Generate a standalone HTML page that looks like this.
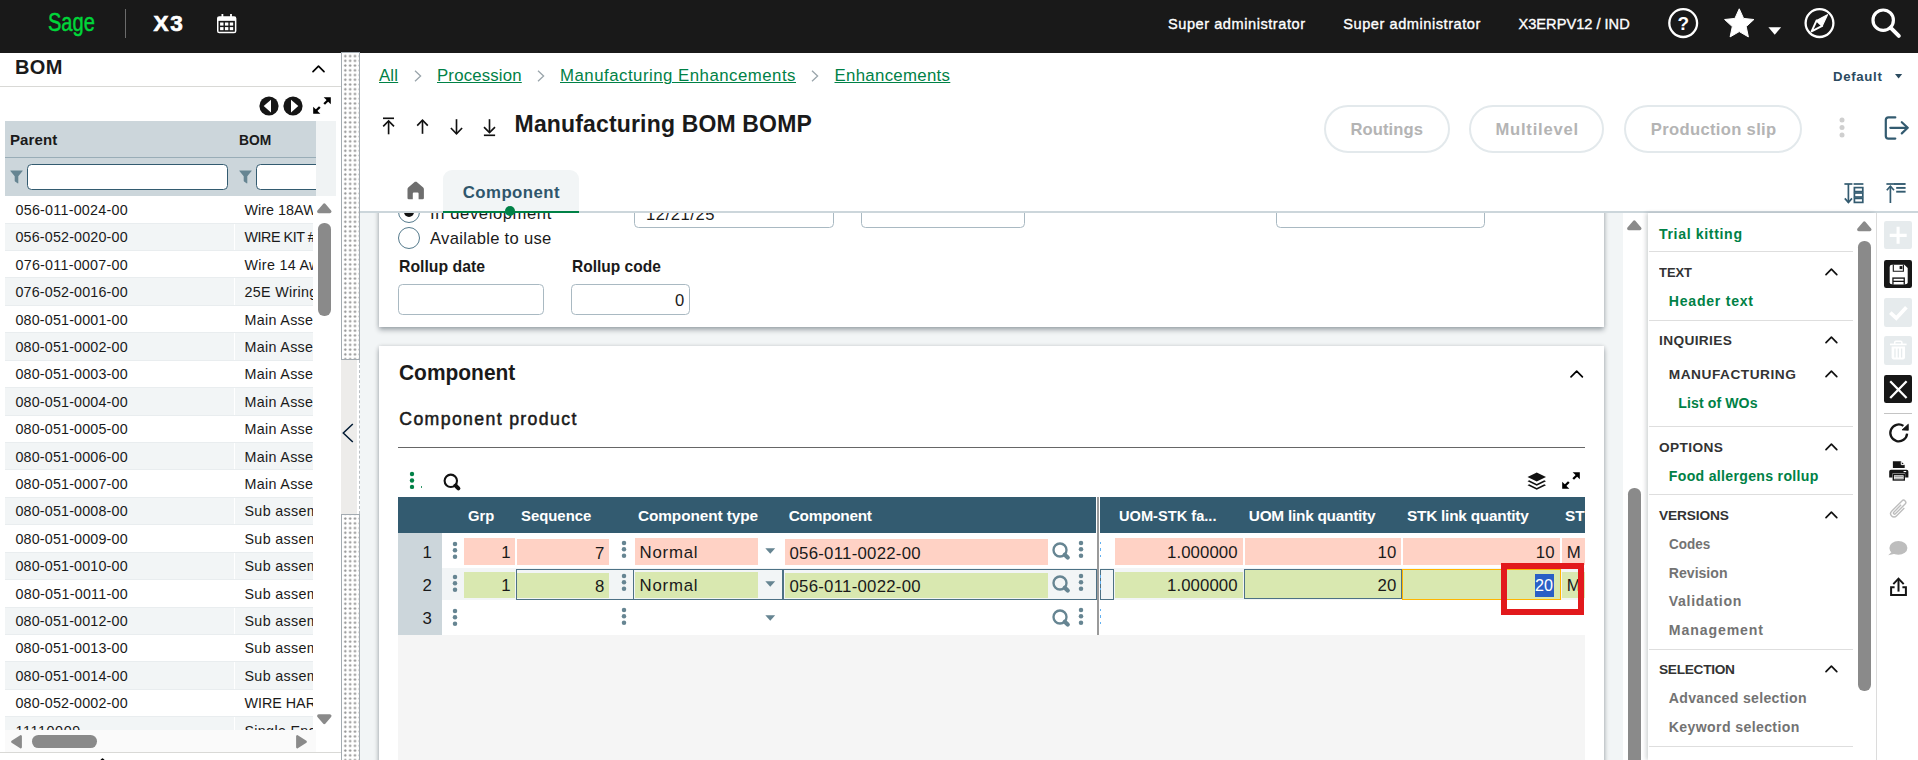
<!DOCTYPE html>
<html lang="en"><head><meta charset="utf-8"><title>Manufacturing BOM BOMP</title>
<style>
html,body{margin:0;padding:0;}
body{width:1918px;height:760px;overflow:hidden;position:relative;background:#fff;font-family:"Liberation Sans", sans-serif;}
.t{position:absolute;white-space:nowrap;line-height:1;margin:0;padding:0;}
svg{display:block;overflow:visible;}
</style></head><body>
<div style="position:absolute;left:0.00px;top:0.00px;width:1918.00px;height:53.00px;background:#191919;"></div>
<span id="t0" class="t" style="left:47.60px;top:10.00px;font-size:25.6px;font-weight:400;color:#00d639;transform:scaleX(0.7829);transform-origin:0 0;-webkit-text-stroke:0.5px #00d639;">Sage</span>
<div style="position:absolute;left:124.70px;top:8.60px;width:1.30px;height:29.20px;background:#6b6b6b;"></div>
<span id="t1" class="t" style="left:153.60px;top:13.00px;font-size:22.5px;font-weight:700;color:#fff;letter-spacing:1.769px;-webkit-text-stroke:0.7px #fff;">X3</span>
<svg style="position:absolute;left:216.70px;top:14.00px;" width="19.40" height="19.40" viewBox="0 0 19.4 19.4"><rect x="0.75" y="2.95" width="17.9" height="15.6" rx="1.6" fill="none" stroke="#fff" stroke-width="1.5"/><rect x="0.75" y="2.95" width="17.9" height="3.9" fill="#fff"/><rect x="4.5" y="0" width="1.8" height="3.6" fill="#fff"/><rect x="13.1" y="0" width="1.8" height="3.6" fill="#fff"/><rect x="3.10" y="8.50" width="3.4" height="3.1" fill="#fff"/><rect x="3.10" y="13.10" width="3.4" height="3.1" fill="#fff"/><rect x="7.95" y="8.50" width="3.4" height="3.1" fill="#fff"/><rect x="7.95" y="13.10" width="3.4" height="3.1" fill="#fff"/><rect x="12.80" y="8.50" width="3.4" height="3.1" fill="#fff"/><rect x="12.80" y="13.10" width="3.4" height="3.1" fill="#fff"/></svg>
<span id="t2" class="t" style="left:1168.00px;top:17.00px;font-size:14.6px;font-weight:400;color:#fff;letter-spacing:0.536px;-webkit-text-stroke:0.35px #fff;">Super administrator</span>
<span id="t3" class="t" style="left:1343.30px;top:17.00px;font-size:14.6px;font-weight:400;color:#fff;letter-spacing:0.536px;-webkit-text-stroke:0.35px #fff;">Super administrator</span>
<span id="t4" class="t" style="left:1518.50px;top:17.00px;font-size:14.6px;font-weight:400;color:#fff;letter-spacing:0.006px;-webkit-text-stroke:0.35px #fff;">X3ERPV12 / IND</span>
<svg style="position:absolute;left:1667.50px;top:8.00px;" width="30.00" height="30.00" viewBox="0 0 30 30"><circle cx="15.2" cy="15.1" r="13.9" fill="none" stroke="#fff" stroke-width="2.3"/><text x="15.2" y="21.9" text-anchor="middle" font-family="Liberation Sans, sans-serif" font-weight="700" font-size="19" fill="#fff">?</text></svg>
<svg style="position:absolute;left:1724.00px;top:8.00px;" width="30.50" height="30.00" viewBox="0 0 30.5 30"><path d="M15.25 0.8 L19.6 10.4 L29.9 11.5 L22.2 18.6 L24.4 28.9 L15.25 23.6 L6.1 28.9 L8.3 18.6 L0.6 11.5 L10.9 10.4 Z" fill="#fff" stroke="#fff" stroke-width="1" stroke-linejoin="round"/></svg>
<svg style="position:absolute;left:1767.50px;top:27.00px;" width="13.50" height="8.00" viewBox="0 0 13.5 8"><path d="M0.4 0.3 H13.1 L6.75 7.8 Z" fill="#fff"/></svg>
<svg style="position:absolute;left:1804.00px;top:8.00px;" width="31.00" height="30.00" viewBox="0 0 31 30"><circle cx="15.5" cy="15.1" r="13.9" fill="none" stroke="#fff" stroke-width="2.3"/><path d="M23.5 6.7 L18.2 17.9 L12.6 12.5 Z" fill="#fff" stroke="#fff" stroke-width="1.2" stroke-linejoin="round"/><path d="M7.6 23.3 L18.2 17.9 L12.6 12.5 Z" fill="none" stroke="#fff" stroke-width="1.9" stroke-linejoin="round"/></svg>
<svg style="position:absolute;left:1871.00px;top:8.00px;" width="31.00" height="31.00" viewBox="0 0 31 31"><circle cx="12.2" cy="12.2" r="10.2" fill="none" stroke="#fff" stroke-width="3.2"/><path d="M19.8 19.8 L27.8 27.8" stroke="#fff" stroke-width="4" stroke-linecap="round"/></svg>
<div style="position:absolute;left:0.00px;top:53.00px;width:341.00px;height:707.00px;background:#fff;"></div>
<span id="t5" class="t" style="left:15.00px;top:57.00px;font-size:20px;font-weight:700;color:#1a1a1a;letter-spacing:0.314px;">BOM</span>
<svg style="position:absolute;left:311.80px;top:65.30px;" width="13.00" height="7.50" viewBox="0 0 13 7.5"><path d="M1 6.7 L6.5 1.2 L12 6.7" fill="none" stroke="#000" stroke-width="1.7" stroke-linecap="round" stroke-linejoin="round"/></svg>
<div style="position:absolute;left:0.00px;top:86.00px;width:341.00px;height:1.00px;background:#d9d9d6;"></div>
<svg style="position:absolute;left:258.90px;top:96.00px;" width="20.00" height="20.00" viewBox="0 0 20 20"><circle cx="10" cy="10" r="9.6" fill="#151515"/><path d="M12 3.8 V16.4 L4.7 10.1 Z" fill="#fff"/></svg>
<svg style="position:absolute;left:282.90px;top:96.00px;" width="20.00" height="20.00" viewBox="0 0 20 20"><circle cx="10" cy="10" r="9.6" fill="#151515"/><path d="M8 3.8 V16.4 L15.3 10.1 Z" fill="#fff"/></svg>
<svg style="position:absolute;left:312.90px;top:96.80px;" width="18.00" height="17.00" viewBox="0 0 18 17"><g fill="#000" stroke="#000" stroke-width="2.3" stroke-linecap="butt"><path d="M11.2 7 L15 3.2" fill="none"/><path d="M10.7 0.2 H17.8 V7.3 Z" stroke="none"/><path d="M6.8 10 L3 13.8" fill="none"/><path d="M0.2 9.7 V16.8 H7.3 Z" stroke="none"/></g></svg>
<div style="position:absolute;left:5.00px;top:121.00px;width:311.00px;height:74.50px;background:#ccd6db;"></div>
<div style="position:absolute;left:316.00px;top:121.00px;width:19.80px;height:74.50px;background:#f0f3f4;"></div>
<div style="position:absolute;left:5.00px;top:157.30px;width:311.00px;height:1.00px;background:#99adb7;"></div>
<span id="t6" class="t" style="left:10.00px;top:132.00px;font-size:15px;font-weight:700;color:#1a1a1a;letter-spacing:0.103px;">Parent</span>
<span id="t7" class="t" style="left:239.00px;top:132.00px;font-size:15px;font-weight:700;color:#1a1a1a;transform:scaleX(0.9200);transform-origin:0 0;">BOM</span>
<svg style="position:absolute;left:9.50px;top:170.00px;" width="13.00" height="14.00" viewBox="0 0 13 14"><path d="M0.6 0.5 H12.4 Q13 0.5 12.6 1.1 L8.3 6.3 V13 Q8.3 13.8 7.6 13.3 L5 11.4 Q4.7 11.2 4.7 10.8 V6.3 L0.4 1.1 Q0 0.5 0.6 0.5Z" fill="#668592"/></svg>
<div style="position:absolute;left:27.00px;top:163.80px;width:200.50px;height:25.80px;background:#fff;border:1.3px solid #335b70;border-radius:4.5px;box-sizing:border-box;"></div>
<svg style="position:absolute;left:238.80px;top:170.00px;" width="13.00" height="14.00" viewBox="0 0 13 14"><path d="M0.6 0.5 H12.4 Q13 0.5 12.6 1.1 L8.3 6.3 V13 Q8.3 13.8 7.6 13.3 L5 11.4 Q4.7 11.2 4.7 10.8 V6.3 L0.4 1.1 Q0 0.5 0.6 0.5Z" fill="#668592"/></svg>
<div style="position:absolute;left:255.80px;top:163.80px;width:60.20px;height:25.80px;overflow:hidden;"><div style="position:absolute;left:0.00px;top:0.00px;width:100.00px;height:25.80px;background:#fff;border:1.3px solid #335b70;border-radius:4.5px;box-sizing:border-box;"></div></div>
<div style="position:absolute;left:5.00px;top:196.00px;width:308.00px;height:533.70px;overflow:hidden;"><div style="position:absolute;left:0.00px;top:-0.30px;width:308.00px;height:27.42px;background:#fff;"></div><span id="t8" class="t" style="left:10.50px;top:7.00px;font-size:14.3px;font-weight:400;color:#1a1a1a;letter-spacing:0.247px;">056-011-0024-00</span><span id="t9" class="t" style="left:239.50px;top:7.00px;font-size:14.3px;font-weight:400;color:#1a1a1a;letter-spacing:0.05px;">Wire 18AWG</span><div style="position:absolute;left:0.00px;top:27.12px;width:308.00px;height:27.42px;background:#f2f5f6;"></div><div style="position:absolute;left:228.80px;top:27.42px;width:1.20px;height:27.42px;background:#fff;"></div><div style="position:absolute;left:0.00px;top:26.62px;width:308.00px;height:1.00px;background:#e9edef;"></div><span id="t10" class="t" style="left:10.50px;top:34.00px;font-size:14.3px;font-weight:400;color:#1a1a1a;letter-spacing:0.171px;">056-052-0020-00</span><span id="t11" class="t" style="left:239.50px;top:34.00px;font-size:14.3px;font-weight:400;color:#1a1a1a;letter-spacing:-0.45px;">WIRE KIT #1</span><div style="position:absolute;left:0.00px;top:54.54px;width:308.00px;height:27.42px;background:#fff;"></div><div style="position:absolute;left:0.00px;top:54.04px;width:308.00px;height:1.00px;background:#e9edef;"></div><span id="t12" class="t" style="left:10.50px;top:62.00px;font-size:14.3px;font-weight:400;color:#1a1a1a;letter-spacing:0.247px;">076-011-0007-00</span><span id="t13" class="t" style="left:239.50px;top:62.00px;font-size:14.3px;font-weight:400;color:#1a1a1a;letter-spacing:0.32px;">Wire 14 Awg</span><div style="position:absolute;left:0.00px;top:81.96px;width:308.00px;height:27.42px;background:#f2f5f6;"></div><div style="position:absolute;left:228.80px;top:82.26px;width:1.20px;height:27.42px;background:#fff;"></div><div style="position:absolute;left:0.00px;top:81.46px;width:308.00px;height:1.00px;background:#e9edef;"></div><span id="t14" class="t" style="left:10.50px;top:89.00px;font-size:14.3px;font-weight:400;color:#1a1a1a;letter-spacing:0.171px;">076-052-0016-00</span><span id="t15" class="t" style="left:239.50px;top:89.00px;font-size:14.3px;font-weight:400;color:#1a1a1a;letter-spacing:0.32px;">25E Wiring</span><div style="position:absolute;left:0.00px;top:109.38px;width:308.00px;height:27.42px;background:#fff;"></div><div style="position:absolute;left:0.00px;top:108.88px;width:308.00px;height:1.00px;background:#e9edef;"></div><span id="t16" class="t" style="left:10.50px;top:117.00px;font-size:14.3px;font-weight:400;color:#1a1a1a;letter-spacing:0.171px;">080-051-0001-00</span><span id="t17" class="t" style="left:239.50px;top:117.00px;font-size:14.3px;font-weight:400;color:#1a1a1a;letter-spacing:0.32px;">Main Assembly</span><div style="position:absolute;left:0.00px;top:136.80px;width:308.00px;height:27.42px;background:#f2f5f6;"></div><div style="position:absolute;left:228.80px;top:137.10px;width:1.20px;height:27.42px;background:#fff;"></div><div style="position:absolute;left:0.00px;top:136.30px;width:308.00px;height:1.00px;background:#e9edef;"></div><span id="t18" class="t" style="left:10.50px;top:144.00px;font-size:14.3px;font-weight:400;color:#1a1a1a;letter-spacing:0.171px;">080-051-0002-00</span><span id="t19" class="t" style="left:239.50px;top:144.00px;font-size:14.3px;font-weight:400;color:#1a1a1a;letter-spacing:0.32px;">Main Assembly</span><div style="position:absolute;left:0.00px;top:164.22px;width:308.00px;height:27.42px;background:#fff;"></div><div style="position:absolute;left:0.00px;top:163.72px;width:308.00px;height:1.00px;background:#e9edef;"></div><span id="t20" class="t" style="left:10.50px;top:171.00px;font-size:14.3px;font-weight:400;color:#1a1a1a;letter-spacing:0.171px;">080-051-0003-00</span><span id="t21" class="t" style="left:239.50px;top:171.00px;font-size:14.3px;font-weight:400;color:#1a1a1a;letter-spacing:0.32px;">Main Assembly</span><div style="position:absolute;left:0.00px;top:191.64px;width:308.00px;height:27.42px;background:#f2f5f6;"></div><div style="position:absolute;left:228.80px;top:191.94px;width:1.20px;height:27.42px;background:#fff;"></div><div style="position:absolute;left:0.00px;top:191.14px;width:308.00px;height:1.00px;background:#e9edef;"></div><span id="t22" class="t" style="left:10.50px;top:199.00px;font-size:14.3px;font-weight:400;color:#1a1a1a;letter-spacing:0.171px;">080-051-0004-00</span><span id="t23" class="t" style="left:239.50px;top:199.00px;font-size:14.3px;font-weight:400;color:#1a1a1a;letter-spacing:0.32px;">Main Assembly</span><div style="position:absolute;left:0.00px;top:219.06px;width:308.00px;height:27.42px;background:#fff;"></div><div style="position:absolute;left:0.00px;top:218.56px;width:308.00px;height:1.00px;background:#e9edef;"></div><span id="t24" class="t" style="left:10.50px;top:226.00px;font-size:14.3px;font-weight:400;color:#1a1a1a;letter-spacing:0.171px;">080-051-0005-00</span><span id="t25" class="t" style="left:239.50px;top:226.00px;font-size:14.3px;font-weight:400;color:#1a1a1a;letter-spacing:0.32px;">Main Assembly</span><div style="position:absolute;left:0.00px;top:246.48px;width:308.00px;height:27.42px;background:#f2f5f6;"></div><div style="position:absolute;left:228.80px;top:246.78px;width:1.20px;height:27.42px;background:#fff;"></div><div style="position:absolute;left:0.00px;top:245.98px;width:308.00px;height:1.00px;background:#e9edef;"></div><span id="t26" class="t" style="left:10.50px;top:254.00px;font-size:14.3px;font-weight:400;color:#1a1a1a;letter-spacing:0.171px;">080-051-0006-00</span><span id="t27" class="t" style="left:239.50px;top:254.00px;font-size:14.3px;font-weight:400;color:#1a1a1a;letter-spacing:0.32px;">Main Assembly</span><div style="position:absolute;left:0.00px;top:273.90px;width:308.00px;height:27.42px;background:#fff;"></div><div style="position:absolute;left:0.00px;top:273.40px;width:308.00px;height:1.00px;background:#e9edef;"></div><span id="t28" class="t" style="left:10.50px;top:281.00px;font-size:14.3px;font-weight:400;color:#1a1a1a;letter-spacing:0.171px;">080-051-0007-00</span><span id="t29" class="t" style="left:239.50px;top:281.00px;font-size:14.3px;font-weight:400;color:#1a1a1a;letter-spacing:0.32px;">Main Assembly</span><div style="position:absolute;left:0.00px;top:301.32px;width:308.00px;height:27.42px;background:#f2f5f6;"></div><div style="position:absolute;left:228.80px;top:301.62px;width:1.20px;height:27.42px;background:#fff;"></div><div style="position:absolute;left:0.00px;top:300.82px;width:308.00px;height:1.00px;background:#e9edef;"></div><span id="t30" class="t" style="left:10.50px;top:308.00px;font-size:14.3px;font-weight:400;color:#1a1a1a;letter-spacing:0.171px;">080-051-0008-00</span><span id="t31" class="t" style="left:239.50px;top:308.00px;font-size:14.3px;font-weight:400;color:#1a1a1a;letter-spacing:0.32px;">Sub assembly</span><div style="position:absolute;left:0.00px;top:328.74px;width:308.00px;height:27.42px;background:#fff;"></div><div style="position:absolute;left:0.00px;top:328.24px;width:308.00px;height:1.00px;background:#e9edef;"></div><span id="t32" class="t" style="left:10.50px;top:336.00px;font-size:14.3px;font-weight:400;color:#1a1a1a;letter-spacing:0.171px;">080-051-0009-00</span><span id="t33" class="t" style="left:239.50px;top:336.00px;font-size:14.3px;font-weight:400;color:#1a1a1a;letter-spacing:0.32px;">Sub assembly</span><div style="position:absolute;left:0.00px;top:356.16px;width:308.00px;height:27.42px;background:#f2f5f6;"></div><div style="position:absolute;left:228.80px;top:356.46px;width:1.20px;height:27.42px;background:#fff;"></div><div style="position:absolute;left:0.00px;top:355.66px;width:308.00px;height:1.00px;background:#e9edef;"></div><span id="t34" class="t" style="left:10.50px;top:363.00px;font-size:14.3px;font-weight:400;color:#1a1a1a;letter-spacing:0.171px;">080-051-0010-00</span><span id="t35" class="t" style="left:239.50px;top:363.00px;font-size:14.3px;font-weight:400;color:#1a1a1a;letter-spacing:0.32px;">Sub assembly</span><div style="position:absolute;left:0.00px;top:383.58px;width:308.00px;height:27.42px;background:#fff;"></div><div style="position:absolute;left:0.00px;top:383.08px;width:308.00px;height:1.00px;background:#e9edef;"></div><span id="t36" class="t" style="left:10.50px;top:391.00px;font-size:14.3px;font-weight:400;color:#1a1a1a;letter-spacing:0.247px;">080-051-0011-00</span><span id="t37" class="t" style="left:239.50px;top:391.00px;font-size:14.3px;font-weight:400;color:#1a1a1a;letter-spacing:0.32px;">Sub assembly</span><div style="position:absolute;left:0.00px;top:411.00px;width:308.00px;height:27.42px;background:#f2f5f6;"></div><div style="position:absolute;left:228.80px;top:411.30px;width:1.20px;height:27.42px;background:#fff;"></div><div style="position:absolute;left:0.00px;top:410.50px;width:308.00px;height:1.00px;background:#e9edef;"></div><span id="t38" class="t" style="left:10.50px;top:418.00px;font-size:14.3px;font-weight:400;color:#1a1a1a;letter-spacing:0.171px;">080-051-0012-00</span><span id="t39" class="t" style="left:239.50px;top:418.00px;font-size:14.3px;font-weight:400;color:#1a1a1a;letter-spacing:0.32px;">Sub assembly</span><div style="position:absolute;left:0.00px;top:438.42px;width:308.00px;height:27.42px;background:#fff;"></div><div style="position:absolute;left:0.00px;top:437.92px;width:308.00px;height:1.00px;background:#e9edef;"></div><span id="t40" class="t" style="left:10.50px;top:445.00px;font-size:14.3px;font-weight:400;color:#1a1a1a;letter-spacing:0.171px;">080-051-0013-00</span><span id="t41" class="t" style="left:239.50px;top:445.00px;font-size:14.3px;font-weight:400;color:#1a1a1a;letter-spacing:0.32px;">Sub assembly</span><div style="position:absolute;left:0.00px;top:465.84px;width:308.00px;height:27.42px;background:#f2f5f6;"></div><div style="position:absolute;left:228.80px;top:466.14px;width:1.20px;height:27.42px;background:#fff;"></div><div style="position:absolute;left:0.00px;top:465.34px;width:308.00px;height:1.00px;background:#e9edef;"></div><span id="t42" class="t" style="left:10.50px;top:473.00px;font-size:14.3px;font-weight:400;color:#1a1a1a;letter-spacing:0.171px;">080-051-0014-00</span><span id="t43" class="t" style="left:239.50px;top:473.00px;font-size:14.3px;font-weight:400;color:#1a1a1a;letter-spacing:0.32px;">Sub assembly</span><div style="position:absolute;left:0.00px;top:493.26px;width:308.00px;height:27.42px;background:#fff;"></div><div style="position:absolute;left:0.00px;top:492.76px;width:308.00px;height:1.00px;background:#e9edef;"></div><span id="t44" class="t" style="left:10.50px;top:500.00px;font-size:14.3px;font-weight:400;color:#1a1a1a;letter-spacing:0.171px;">080-052-0002-00</span><span id="t45" class="t" style="left:239.50px;top:500.00px;font-size:14.3px;font-weight:400;color:#1a1a1a;letter-spacing:0.0px;">WIRE HARNESS</span><div style="position:absolute;left:0.00px;top:520.68px;width:308.00px;height:27.42px;background:#f2f5f6;"></div><div style="position:absolute;left:228.80px;top:520.98px;width:1.20px;height:27.42px;background:#fff;"></div><div style="position:absolute;left:0.00px;top:520.18px;width:308.00px;height:1.00px;background:#e9edef;"></div><span id="t46" class="t" style="left:10.50px;top:528.00px;font-size:14.3px;font-weight:400;color:#1a1a1a;letter-spacing:0.609px;">11110009</span><span id="t47" class="t" style="left:239.50px;top:528.00px;font-size:14.3px;font-weight:400;color:#1a1a1a;letter-spacing:0.32px;">Single End</span></div>
<svg style="position:absolute;left:317.00px;top:203.00px;" width="14.60" height="10.60" viewBox="0 0 14.5 10"><path d="M7.25 1.8 L12.8 8.3 L1.7 8.3 Z" fill="#8a8a8a" stroke="#8a8a8a" stroke-width="3.2" stroke-linejoin="round"/></svg>
<div style="position:absolute;left:318.40px;top:223.00px;width:12.70px;height:92.80px;background:#8a8a8a;border-radius:6.2px;"></div>
<svg style="position:absolute;left:317.40px;top:714.00px;" width="14.60" height="10.60" viewBox="0 0 14.5 10"><path d="M7.25 8.2 L12.8 1.7 L1.7 1.7 Z" fill="#8a8a8a" stroke="#8a8a8a" stroke-width="3.2" stroke-linejoin="round"/></svg>
<div style="position:absolute;left:5.00px;top:729.70px;width:311.00px;height:22.60px;background:#fafafa;"></div>
<svg style="position:absolute;left:10.80px;top:735.20px;" width="11.00" height="13.60" viewBox="0 0 11 13.5"><path d="M1.2 6.75 L9.8 1.2 L9.8 12.3 Z" fill="#8a8a8a" stroke="#8a8a8a" stroke-width="2.2" stroke-linejoin="round"/></svg>
<div style="position:absolute;left:31.70px;top:735.00px;width:65.30px;height:12.80px;background:#8a8a8a;border-radius:6.4px;"></div>
<svg style="position:absolute;left:296.20px;top:735.20px;" width="11.00" height="13.60" viewBox="0 0 11 13.5"><path d="M9.8 6.75 L1.2 1.2 L1.2 12.3 Z" fill="#8a8a8a" stroke="#8a8a8a" stroke-width="2.2" stroke-linejoin="round"/></svg>
<div style="position:absolute;left:0.00px;top:752.30px;width:341.00px;height:1.00px;background:#d9d9d6;"></div>
<svg style="position:absolute;left:98.00px;top:758.20px;" width="9.00" height="5.00" viewBox="0 0 9 5"><path d="M1 4.2 L4.5 1.2 L8 4.2" fill="none" stroke="#000" stroke-width="1.6" stroke-linecap="round" stroke-linejoin="round"/></svg>
<div style="position:absolute;left:341.00px;top:52.00px;width:19.00px;height:308.00px;background-color:#fff;background-image:radial-gradient(circle at 2.4px 2.4px,#8d8d8d 0.75px,rgba(141,141,141,.3) 1.25px,transparent 1.6px);background-size:4.85px 4.74px;border:1px solid #a3abb1;box-sizing:border-box;background-position:0.9px 0.7px;"></div>
<div style="position:absolute;left:341.00px;top:360.00px;width:16.40px;height:154.00px;background:#edecea;"></div>
<div style="position:absolute;left:357.40px;top:360.00px;width:2.60px;height:154.00px;background:#fff;"></div>
<div style="position:absolute;left:359.00px;top:360.00px;width:1.00px;height:154.00px;border-left:1px dashed #b9bfc3;box-sizing:border-box;"></div>
<div style="position:absolute;left:341.00px;top:514.00px;width:19.00px;height:250.00px;background-color:#fff;background-image:radial-gradient(circle at 2.4px 2.4px,#8d8d8d 0.75px,rgba(141,141,141,.3) 1.25px,transparent 1.6px);background-size:4.85px 4.74px;border:1px solid #a3abb1;box-sizing:border-box;background-position:0.9px 1.2px;"></div>
<svg style="position:absolute;left:341.50px;top:422.50px;" width="12.00" height="20.00" viewBox="0 0 12 20"><path d="M10.8 1 L1.3 10 L10.8 19" fill="none" stroke="#001a33" stroke-width="1.5"/></svg>
<div style="position:absolute;left:360.00px;top:53.00px;width:1558.00px;height:158.50px;background:#fff;"></div>
<span id="t48" class="t" style="left:379.00px;top:68.00px;font-size:16.8px;font-weight:400;color:#008146;letter-spacing:0.172px;text-decoration:underline;text-decoration-thickness:1px;text-underline-offset:1.2px;">All</span>
<svg style="position:absolute;left:413.50px;top:70.30px;" width="8.00" height="12.00" viewBox="0 0 8 12"><path d="M1 0.8 L6.6 6 L1 11.2" fill="none" stroke="#9aa5ab" stroke-width="1.3"/></svg>
<span id="t49" class="t" style="left:437.00px;top:68.00px;font-size:16.8px;font-weight:400;color:#008146;letter-spacing:0.176px;text-decoration:underline;text-decoration-thickness:1px;text-underline-offset:1.2px;">Procession</span>
<svg style="position:absolute;left:537.00px;top:70.30px;" width="8.00" height="12.00" viewBox="0 0 8 12"><path d="M1 0.8 L6.6 6 L1 11.2" fill="none" stroke="#9aa5ab" stroke-width="1.3"/></svg>
<span id="t50" class="t" style="left:560.00px;top:68.00px;font-size:16.8px;font-weight:400;color:#008146;letter-spacing:0.502px;text-decoration:underline;text-decoration-thickness:1px;text-underline-offset:1.2px;">Manufacturing Enhancements</span>
<svg style="position:absolute;left:811.00px;top:70.30px;" width="8.00" height="12.00" viewBox="0 0 8 12"><path d="M1 0.8 L6.6 6 L1 11.2" fill="none" stroke="#9aa5ab" stroke-width="1.3"/></svg>
<span id="t51" class="t" style="left:834.50px;top:68.00px;font-size:16.8px;font-weight:400;color:#008146;letter-spacing:0.322px;text-decoration:underline;text-decoration-thickness:1px;text-underline-offset:1.2px;">Enhancements</span>
<span id="t52" class="t" style="left:1833.00px;top:70.00px;font-size:13.2px;font-weight:700;color:#2b4a5f;letter-spacing:0.683px;">Default</span>
<svg style="position:absolute;left:1895.00px;top:73.80px;" width="7.20" height="4.40" viewBox="0 0 7.2 4.4"><path d="M0 0 H7.2 L3.6 4.4 Z" fill="#2b4a5f"/></svg>
<svg style="position:absolute;left:382.00px;top:116.50px;" width="13.00" height="18.00" viewBox="0 0 13 18"><g fill="none" stroke="#111" stroke-width="1.65" stroke-linecap="butt" stroke-linejoin="miter"><path d="M1 1.3 H12"/><path d="M6.6 17.3 V4.2"/><path d="M1.2 9.4 L6.6 3.9 L12 9.4"/></g></svg>
<svg style="position:absolute;left:416.00px;top:119.00px;" width="13.00" height="15.00" viewBox="0 0 13 15"><g fill="none" stroke="#111" stroke-width="1.65" stroke-linecap="butt" stroke-linejoin="miter"><path d="M6.5 14.8 V1.4"/><path d="M1.2 6.6 L6.5 1.1 L11.8 6.6"/></g></svg>
<svg style="position:absolute;left:449.50px;top:119.00px;" width="13.00" height="16.00" viewBox="0 0 13 16"><g fill="none" stroke="#111" stroke-width="1.65" stroke-linecap="butt" stroke-linejoin="miter"><path d="M6.5 0.2 V14.6"/><path d="M0.9 9 L6.5 14.8 L12.1 9"/></g></svg>
<svg style="position:absolute;left:483.10px;top:119.00px;" width="13.00" height="17.50" viewBox="0 0 13 17.5"><g fill="none" stroke="#111" stroke-width="1.65" stroke-linecap="butt" stroke-linejoin="miter"><path d="M6.5 0.2 V13.2"/><path d="M1 8.2 L6.5 13.6 L12 8.2"/><path d="M0.9 16.3 H12.1"/></g></svg>
<span id="t53" class="t" style="left:514.60px;top:113.00px;font-size:23px;font-weight:700;color:#1a1a1a;letter-spacing:0.158px;">Manufacturing BOM BOMP</span>
<div style="position:absolute;left:1324.00px;top:105.00px;width:126.00px;height:48.00px;border:2px solid #e3e9ec;border-radius:24px;box-sizing:border-box;background:#fff;"></div>
<span id="t54" class="t" style="left:1350.50px;top:122.00px;font-size:16.6px;font-weight:700;color:#b4b4b4;letter-spacing:0.085px;">Routings</span>
<div style="position:absolute;left:1469.00px;top:105.00px;width:135.00px;height:48.00px;border:2px solid #e3e9ec;border-radius:24px;box-sizing:border-box;background:#fff;"></div>
<span id="t55" class="t" style="left:1495.50px;top:122.00px;font-size:16.6px;font-weight:700;color:#b4b4b4;letter-spacing:0.764px;">Multilevel</span>
<div style="position:absolute;left:1624.00px;top:105.00px;width:178.00px;height:48.00px;border:2px solid #e3e9ec;border-radius:24px;box-sizing:border-box;background:#fff;"></div>
<span id="t56" class="t" style="left:1650.80px;top:122.00px;font-size:16.6px;font-weight:700;color:#b4b4b4;letter-spacing:0.330px;">Production slip</span>
<svg style="position:absolute;left:1838.80px;top:117.10px;" width="6.00" height="21.00" viewBox="0 0 6 21.0"><circle cx="3" cy="3.0" r="2.5" fill="#cfcfcf"/><circle cx="3" cy="10.5" r="2.5" fill="#cfcfcf"/><circle cx="3" cy="18.0" r="2.5" fill="#cfcfcf"/></svg>
<svg style="position:absolute;left:1883.50px;top:116.00px;" width="25.00" height="24.00" viewBox="0 0 25 24"><g fill="none" stroke="#335b70" stroke-width="2.2" stroke-linecap="round" stroke-linejoin="round"><path d="M11.3 1.4 H4.4 Q1.8 1.4 1.8 4 V20 Q1.8 22.6 4.4 22.6 H11.3"/><path d="M6.3 11.8 H23.3"/><path d="M17.8 6.2 L23.7 11.8 L17.8 17.4"/></g></svg>
<svg style="position:absolute;left:407.00px;top:181.00px;" width="17.40" height="18.80" viewBox="0 0 17.4 18.8"><path d="M8.7 0.8 Q9.1 0.5 9.5 0.8 L16.2 6.6 Q16.9 7.2 16.9 8.2 V17 Q16.9 18.3 15.6 18.3 H11.6 V12.6 Q11.6 11.6 10.6 11.6 H6.8 Q5.8 11.6 5.8 12.6 V18.3 H1.8 Q0.5 18.3 0.5 17 V8.2 Q0.5 7.2 1.2 6.6 L7.9 0.8 Q8.3 0.5 8.7 0.8Z" fill="#6e6e6e"/></svg>
<div style="position:absolute;left:443.00px;top:170.00px;width:136.00px;height:42.00px;background:#f2f5f6;border-radius:9px 9px 0 0;"></div>
<span id="t57" class="t" style="left:462.80px;top:185.00px;font-size:16.8px;font-weight:700;color:#2f566c;letter-spacing:0.435px;">Component</span>
<svg style="position:absolute;left:1843.50px;top:183.00px;" width="20.00" height="20.50" viewBox="0 0 20 20.5"><g fill="none" stroke="#335b70" stroke-width="1.7"><path d="M0.4 1 H8.4"/><path d="M4.4 1 V19.4"/><path d="M0.8 15.4 L4.4 19.4 L8 15.4"/><path d="M9.6 1 H19.4"/><rect x="10.4" y="4.6" width="8.4" height="4"/><rect x="10.4" y="10" width="8.4" height="4"/><rect x="10.4" y="15.4" width="8.4" height="4"/></g></svg>
<svg style="position:absolute;left:1885.50px;top:183.00px;" width="20.00" height="20.50" viewBox="0 0 20 20.5"><g fill="none" stroke="#335b70" stroke-width="1.7"><path d="M0.4 1 H8.4"/><path d="M4.4 20 V3.4"/><path d="M0.8 7.2 L4.4 3.2 L8 7.2"/><path d="M8 1 H19.6" stroke-width="1.9"/><path d="M10.2 4.9 H19.6" stroke-width="1.9"/><path d="M10.2 8.7 H19.6" stroke-width="1.9"/></g></svg>
<div style="position:absolute;left:360.00px;top:211.00px;width:1288.00px;height:549.00px;overflow:hidden;"><div style="position:absolute;left:0.00px;top:0.00px;width:1288.00px;height:549.00px;background:#f2f5f6;"></div><div style="position:absolute;left:19.00px;top:-31.00px;width:1225.00px;height:147.00px;background:#fff;box-shadow:0 3px 5px rgba(0,20,30,.32),0 0 4px rgba(0,20,30,.12);"></div><div style="position:absolute;left:38.00px;top:-10.50px;width:22.00px;height:22.00px;border:1px solid #557a8c;border-radius:50%;box-sizing:border-box;background:#fff;"></div><div style="position:absolute;left:43.70px;top:-4.80px;width:10.60px;height:10.60px;border-radius:50%;background:#111;"></div><span id="t58" class="t" style="left:70.00px;top:-5.00px;font-size:16.6px;font-weight:400;color:#1a1a1a;letter-spacing:0.602px;">In development</span><div style="position:absolute;left:38.00px;top:15.50px;width:22.00px;height:22.00px;border:1px solid #557a8c;border-radius:50%;box-sizing:border-box;background:#fff;"></div><span id="t59" class="t" style="left:70.00px;top:20.00px;font-size:16.6px;font-weight:400;color:#1a1a1a;letter-spacing:0.296px;">Available to use</span><div style="position:absolute;left:274.00px;top:-14.00px;width:200.00px;height:31.00px;border:1px solid #a9b9c2;border-radius:4.5px;box-sizing:border-box;background:#fff;"></div><span id="t60" class="t" style="left:286.00px;top:-4.00px;font-size:16.6px;font-weight:400;color:#1a1a1a;letter-spacing:0.558px;">12/21/25</span><div style="position:absolute;left:501.00px;top:-14.00px;width:164.00px;height:31.00px;border:1px solid #a9b9c2;border-radius:4.5px;box-sizing:border-box;background:#fff;"></div><div style="position:absolute;left:916.00px;top:-14.00px;width:209.00px;height:31.00px;border:1px solid #a9b9c2;border-radius:4.5px;box-sizing:border-box;background:#fff;"></div><span id="t61" class="t" style="left:39.00px;top:47.00px;font-size:16.4px;font-weight:700;color:#1a1a1a;transform:scaleX(0.9636);transform-origin:0 0;">Rollup date</span><span id="t62" class="t" style="left:211.80px;top:47.00px;font-size:16.4px;font-weight:700;color:#1a1a1a;transform:scaleX(0.9467);transform-origin:0 0;">Rollup code</span><div style="position:absolute;left:38.00px;top:73.00px;width:146.00px;height:31.00px;border:1px solid #a9b9c2;border-radius:4.5px;box-sizing:border-box;background:#fff;"></div><div style="position:absolute;left:211.00px;top:73.00px;width:119.00px;height:31.00px;border:1px solid #a9b9c2;border-radius:4.5px;box-sizing:border-box;background:#fff;"></div><span id="t63" class="t" style="left:315.00px;top:82.00px;font-size:16.6px;font-weight:400;color:#1a1a1a;">0</span><div style="position:absolute;left:19.00px;top:135.00px;width:1225.00px;height:430.00px;background:#fff;box-shadow:0 3px 5px rgba(0,20,30,.32),0 0 4px rgba(0,20,30,.12);"></div><span id="t64" class="t" style="left:39.30px;top:151.00px;font-size:22.3px;font-weight:700;color:#1a1a1a;transform:scaleX(0.9390);transform-origin:0 0;">Component</span><svg style="position:absolute;left:1210.20px;top:159.20px;" width="13.40" height="7.60" viewBox="0 0 13.4 7.6"><path d="M1 6.8 L6.7 1.2 L12.4 6.8" fill="none" stroke="#000" stroke-width="1.7" stroke-linecap="round" stroke-linejoin="round"/></svg><span id="t65" class="t" style="left:39.30px;top:200.00px;font-size:17.7px;font-weight:400;color:#1a1a1a;letter-spacing:1.353px;-webkit-text-stroke:0.5px #1a1a1a;">Component product</span><div style="position:absolute;left:38.00px;top:235.60px;width:1187.00px;height:1.10px;background:#666;"></div><svg style="position:absolute;left:48.80px;top:260.10px;" width="6.00" height="18.90" viewBox="0 0 6 18.9"><circle cx="3" cy="3.0" r="2.2" fill="#008146"/><circle cx="3" cy="9.45" r="2.2" fill="#008146"/><circle cx="3" cy="15.9" r="2.2" fill="#008146"/></svg><div style="position:absolute;left:61.00px;top:275.20px;width:1.00px;height:1.80px;background:#008146;opacity:.8;"></div><svg style="position:absolute;left:82.50px;top:261.60px;" width="18.00" height="18.00" viewBox="0 0 18 18"><circle cx="7.8" cy="7.8" r="6.2" fill="none" stroke="#111" stroke-width="2.1"/><path d="M12.6 12.6 L15.4 15.4" stroke="#111" stroke-width="4" stroke-linecap="round"/></svg><svg style="position:absolute;left:1166.50px;top:261.30px;" width="19.50" height="18.00" viewBox="0 0 19.5 18"><path d="M9.75 0.4 L19 5 L9.75 9.6 L0.5 5 Z" fill="#111"/><path d="M2.2 8.3 L0.5 9.2 L9.75 13.8 L19 9.2 L17.3 8.3 L9.75 12 Z" fill="#111"/><path d="M2.2 12.3 L0.5 13.2 L9.75 17.8 L19 13.2 L17.3 12.3 L9.75 16 Z" fill="#111"/></svg><svg style="position:absolute;left:1201.50px;top:260.50px;" width="18.00" height="17.00" viewBox="0 0 18 17"><g fill="#000" stroke="#000" stroke-width="2.3" stroke-linecap="butt"><path d="M11.2 7 L15 3.2" fill="none"/><path d="M10.7 0.2 H17.8 V7.3 Z" stroke="none"/><path d="M6.8 10 L3 13.8" fill="none"/><path d="M0.2 9.7 V16.8 H7.3 Z" stroke="none"/></g></svg><div style="position:absolute;left:38.00px;top:423.60px;width:1187.00px;height:140.00px;background:#f5f5f5;"></div><div style="position:absolute;left:38.00px;top:286.00px;width:698.20px;height:36.20px;background:#335b70;"></div><div style="position:absolute;left:740.00px;top:286.00px;width:484.80px;height:36.20px;background:#335b70;"></div><span id="t66" class="t" style="left:108.00px;top:297.00px;font-size:15.4px;font-weight:700;color:#fff;transform:scaleX(0.9607);transform-origin:0 0;">Grp</span><span id="t67" class="t" style="left:160.50px;top:297.00px;font-size:15.4px;font-weight:700;color:#fff;transform:scaleX(0.9667);transform-origin:0 0;">Sequence</span><span id="t68" class="t" style="left:278.00px;top:297.00px;font-size:15.4px;font-weight:700;color:#fff;letter-spacing:-0.109px;">Component type</span><span id="t69" class="t" style="left:428.80px;top:297.00px;font-size:15.4px;font-weight:700;color:#fff;letter-spacing:-0.287px;">Component</span><span id="t70" class="t" style="left:759.30px;top:297.00px;font-size:15.4px;font-weight:700;color:#fff;transform:scaleX(0.9502);transform-origin:0 0;">UOM-STK fa...</span><span id="t71" class="t" style="left:888.80px;top:297.00px;font-size:15.4px;font-weight:700;color:#fff;letter-spacing:-0.258px;">UOM link quantity</span><span id="t72" class="t" style="left:1047.00px;top:297.00px;font-size:15.4px;font-weight:700;color:#fff;letter-spacing:-0.244px;">STK link quantity</span><div style="position:absolute;left:1205.00px;top:286.00px;width:19.80px;height:36.20px;overflow:hidden;"><span id="t73" class="t" style="left:0.00px;top:11.00px;font-size:15.4px;font-weight:700;color:#fff;">STK unit</span></div><div style="position:absolute;left:38.00px;top:322.20px;width:1187.00px;height:101.40px;background:#fff;"></div><div style="position:absolute;left:38.00px;top:356.60px;width:1187.00px;height:32.80px;background:#f2f5f6;"></div><div style="position:absolute;left:38.00px;top:322.20px;width:43.80px;height:101.40px;background:#ccd6db;"></div><div style="position:absolute;left:736.60px;top:286.00px;width:2.60px;height:137.60px;background:#9a9a9a;"></div><div style="position:absolute;left:739.20px;top:286.00px;width:0.80px;height:137.60px;background:#fff;"></div><span id="t74" class="t" style="left:62.50px;top:334.00px;font-size:16.8px;font-weight:400;color:#1a1a1a;">1</span><div style="position:absolute;left:104.20px;top:327.40px;width:50.40px;height:26.20px;background:#ffd2c5;"></div><div style="position:absolute;left:157.20px;top:328.20px;width:91.60px;height:25.40px;background:#ffd2c5;"></div><div style="position:absolute;left:275.00px;top:327.40px;width:123.30px;height:26.20px;background:#ffd2c5;"></div><div style="position:absolute;left:425.00px;top:327.90px;width:262.50px;height:25.70px;background:#ffd2c5;"></div><div style="position:absolute;left:755.00px;top:327.40px;width:127.50px;height:26.20px;background:#ffd2c5;"></div><div style="position:absolute;left:884.50px;top:327.40px;width:156.30px;height:26.20px;background:#ffd2c5;"></div><div style="position:absolute;left:1042.50px;top:327.40px;width:157.00px;height:26.20px;background:#ffd2c5;"></div><span id="t75" class="t" style="left:141.20px;top:334.00px;font-size:16.8px;font-weight:400;color:#1a1a1a;">1</span><span id="t76" class="t" style="left:235.00px;top:335.00px;font-size:16.8px;font-weight:400;color:#1a1a1a;">7</span><span id="t77" class="t" style="left:279.50px;top:334.00px;font-size:16.8px;font-weight:400;color:#1a1a1a;letter-spacing:0.801px;">Normal</span><span id="t78" class="t" style="left:429.50px;top:335.00px;font-size:16.8px;font-weight:400;color:#1a1a1a;letter-spacing:0.256px;">056-011-0022-00</span><span id="t79" class="t" style="left:807.00px;top:334.00px;font-size:16.8px;font-weight:400;color:#1a1a1a;letter-spacing:0.086px;">1.000000</span><span id="t80" class="t" style="left:1017.60px;top:334.00px;font-size:16.8px;font-weight:400;color:#1a1a1a;letter-spacing:0.128px;">10</span><span id="t81" class="t" style="left:1175.80px;top:334.00px;font-size:16.8px;font-weight:400;color:#1a1a1a;letter-spacing:0.128px;">10</span><div style="position:absolute;left:1201.80px;top:327.40px;width:23.00px;height:26.20px;background:#ffd2c5;overflow:hidden;"><span id="t82" class="t" style="left:5.00px;top:7.00px;font-size:16.8px;font-weight:400;color:#1a1a1a;">M</span></div><svg style="position:absolute;left:91.80px;top:330.15px;" width="6.00" height="18.70" viewBox="0 0 6 18.7"><circle cx="3" cy="3.0" r="2.25" fill="#668592"/><circle cx="3" cy="9.35" r="2.25" fill="#668592"/><circle cx="3" cy="15.7" r="2.25" fill="#668592"/></svg><svg style="position:absolute;left:261.10px;top:329.05px;" width="6.00" height="18.70" viewBox="0 0 6 18.7"><circle cx="3" cy="3.0" r="2.25" fill="#668592"/><circle cx="3" cy="9.35" r="2.25" fill="#668592"/><circle cx="3" cy="15.7" r="2.25" fill="#668592"/></svg><svg style="position:absolute;left:405.00px;top:336.50px;" width="10.50" height="6.00" viewBox="0 0 10.5 6"><path d="M0.3 0.3 H10.2 L5.25 5.8 Z" fill="#668592"/></svg><svg style="position:absolute;left:690.90px;top:329.70px;" width="19.00" height="19.00" viewBox="0 0 19 19"><circle cx="9" cy="9" r="6.5" fill="none" stroke="#668592" stroke-width="2.35"/><path d="M13.8 13.8 L16.7 16.5" stroke="#668592" stroke-width="4.3" stroke-linecap="round"/></svg><svg style="position:absolute;left:718.00px;top:329.15px;" width="6.00" height="18.70" viewBox="0 0 6 18.7"><circle cx="3" cy="3.0" r="2.25" fill="#668592"/><circle cx="3" cy="9.35" r="2.25" fill="#668592"/><circle cx="3" cy="15.7" r="2.25" fill="#668592"/></svg><div style="position:absolute;left:740.20px;top:330.85px;width:1.00px;height:2.60px;background:#62b0f0;"></div><div style="position:absolute;left:740.20px;top:337.20px;width:1.00px;height:2.60px;background:#62b0f0;"></div><div style="position:absolute;left:740.20px;top:343.55px;width:1.00px;height:2.60px;background:#62b0f0;"></div><span id="t83" class="t" style="left:62.50px;top:367.00px;font-size:16.8px;font-weight:400;color:#1a1a1a;">2</span><div style="position:absolute;left:156.00px;top:358.00px;width:118.00px;height:31.00px;border:1px solid #4d7185;box-sizing:border-box;background:#f2f5f6;"></div><div style="position:absolute;left:273.00px;top:358.00px;width:150.00px;height:31.00px;border:1px solid #4d7185;box-sizing:border-box;background:#f2f5f6;"></div><div style="position:absolute;left:423.00px;top:358.00px;width:314.00px;height:31.00px;border:1px solid #4d7185;box-sizing:border-box;background:#f2f5f6;"></div><div style="position:absolute;left:740.00px;top:358.00px;width:14.00px;height:31.00px;border:1px solid #4d7185;box-sizing:border-box;background:#f2f5f6;"></div><div style="position:absolute;left:884.00px;top:358.00px;width:158.00px;height:30.00px;border:1px solid #4d7185;box-sizing:border-box;background:#d9e8b0;"></div><div style="position:absolute;left:1042.00px;top:358.00px;width:159.00px;height:31.00px;border:1px solid #ffb500;box-sizing:border-box;background:#d9e8b0;"></div><div style="position:absolute;left:104.20px;top:361.00px;width:50.40px;height:26.20px;background:#d9e8b0;"></div><div style="position:absolute;left:157.20px;top:361.80px;width:91.60px;height:25.40px;background:#d9e8b0;"></div><div style="position:absolute;left:275.00px;top:361.00px;width:123.30px;height:26.20px;background:#d9e8b0;"></div><div style="position:absolute;left:425.00px;top:361.50px;width:262.50px;height:25.70px;background:#d9e8b0;"></div><div style="position:absolute;left:755.00px;top:361.00px;width:127.50px;height:26.20px;background:#d9e8b0;"></div><span id="t84" class="t" style="left:141.20px;top:367.00px;font-size:16.8px;font-weight:400;color:#1a1a1a;">1</span><span id="t85" class="t" style="left:235.00px;top:368.00px;font-size:16.8px;font-weight:400;color:#1a1a1a;">8</span><span id="t86" class="t" style="left:279.50px;top:367.00px;font-size:16.8px;font-weight:400;color:#1a1a1a;letter-spacing:0.801px;">Normal</span><span id="t87" class="t" style="left:429.50px;top:368.00px;font-size:16.8px;font-weight:400;color:#1a1a1a;letter-spacing:0.256px;">056-011-0022-00</span><span id="t88" class="t" style="left:807.00px;top:367.00px;font-size:16.8px;font-weight:400;color:#1a1a1a;letter-spacing:0.086px;">1.000000</span><span id="t89" class="t" style="left:1017.60px;top:367.00px;font-size:16.8px;font-weight:400;color:#1a1a1a;letter-spacing:0.128px;">20</span><div style="position:absolute;left:1174.60px;top:362.80px;width:19.20px;height:23.00px;background:#2a5fc6;"></div><span id="t90" class="t" style="left:1175.40px;top:367.00px;font-size:16.8px;font-weight:400;color:#fff;transform:scaleX(0.9640);transform-origin:0 0;">20</span><div style="position:absolute;left:1201.80px;top:361.00px;width:23.00px;height:26.20px;background:#d9e8b0;overflow:hidden;"><span id="t91" class="t" style="left:5.00px;top:6.00px;font-size:16.8px;font-weight:400;color:#1a1a1a;">M</span></div><svg style="position:absolute;left:91.80px;top:363.25px;" width="6.00" height="18.70" viewBox="0 0 6 18.7"><circle cx="3" cy="3.0" r="2.25" fill="#668592"/><circle cx="3" cy="9.35" r="2.25" fill="#668592"/><circle cx="3" cy="15.7" r="2.25" fill="#668592"/></svg><svg style="position:absolute;left:261.10px;top:362.15px;" width="6.00" height="18.70" viewBox="0 0 6 18.7"><circle cx="3" cy="3.0" r="2.25" fill="#668592"/><circle cx="3" cy="9.35" r="2.25" fill="#668592"/><circle cx="3" cy="15.7" r="2.25" fill="#668592"/></svg><svg style="position:absolute;left:405.00px;top:369.60px;" width="10.50" height="6.00" viewBox="0 0 10.5 6"><path d="M0.3 0.3 H10.2 L5.25 5.8 Z" fill="#668592"/></svg><svg style="position:absolute;left:690.90px;top:362.80px;" width="19.00" height="19.00" viewBox="0 0 19 19"><circle cx="9" cy="9" r="6.5" fill="none" stroke="#668592" stroke-width="2.35"/><path d="M13.8 13.8 L16.7 16.5" stroke="#668592" stroke-width="4.3" stroke-linecap="round"/></svg><svg style="position:absolute;left:718.00px;top:362.25px;" width="6.00" height="18.70" viewBox="0 0 6 18.7"><circle cx="3" cy="3.0" r="2.25" fill="#668592"/><circle cx="3" cy="9.35" r="2.25" fill="#668592"/><circle cx="3" cy="15.7" r="2.25" fill="#668592"/></svg><div style="position:absolute;left:740.20px;top:363.95px;width:1.00px;height:2.60px;background:#62b0f0;"></div><div style="position:absolute;left:740.20px;top:370.30px;width:1.00px;height:2.60px;background:#62b0f0;"></div><div style="position:absolute;left:740.20px;top:376.65px;width:1.00px;height:2.60px;background:#62b0f0;"></div><span id="t92" class="t" style="left:62.50px;top:400.00px;font-size:16.8px;font-weight:400;color:#1a1a1a;">3</span><svg style="position:absolute;left:91.80px;top:397.15px;" width="6.00" height="18.70" viewBox="0 0 6 18.7"><circle cx="3" cy="3.0" r="2.25" fill="#668592"/><circle cx="3" cy="9.35" r="2.25" fill="#668592"/><circle cx="3" cy="15.7" r="2.25" fill="#668592"/></svg><svg style="position:absolute;left:261.10px;top:396.05px;" width="6.00" height="18.70" viewBox="0 0 6 18.7"><circle cx="3" cy="3.0" r="2.25" fill="#668592"/><circle cx="3" cy="9.35" r="2.25" fill="#668592"/><circle cx="3" cy="15.7" r="2.25" fill="#668592"/></svg><svg style="position:absolute;left:405.00px;top:403.50px;" width="10.50" height="6.00" viewBox="0 0 10.5 6"><path d="M0.3 0.3 H10.2 L5.25 5.8 Z" fill="#668592"/></svg><svg style="position:absolute;left:690.90px;top:396.70px;" width="19.00" height="19.00" viewBox="0 0 19 19"><circle cx="9" cy="9" r="6.5" fill="none" stroke="#668592" stroke-width="2.35"/><path d="M13.8 13.8 L16.7 16.5" stroke="#668592" stroke-width="4.3" stroke-linecap="round"/></svg><svg style="position:absolute;left:718.00px;top:396.15px;" width="6.00" height="18.70" viewBox="0 0 6 18.7"><circle cx="3" cy="3.0" r="2.25" fill="#668592"/><circle cx="3" cy="9.35" r="2.25" fill="#668592"/><circle cx="3" cy="15.7" r="2.25" fill="#668592"/></svg><div style="position:absolute;left:740.20px;top:397.85px;width:1.00px;height:2.60px;background:#62b0f0;"></div><div style="position:absolute;left:740.20px;top:404.20px;width:1.00px;height:2.60px;background:#62b0f0;"></div><div style="position:absolute;left:740.20px;top:410.55px;width:1.00px;height:2.60px;background:#62b0f0;"></div><div style="position:absolute;left:1141.00px;top:352.00px;width:83.00px;height:52.00px;border:6px solid #e2191c;box-sizing:border-box;"></div><div style="position:absolute;left:1262.80px;top:0.00px;width:25.50px;height:549.00px;background:#fff;"></div><svg style="position:absolute;left:1267.00px;top:9.30px;" width="14.60" height="10.40" viewBox="0 0 14.5 10"><path d="M7.25 1.8 L12.8 8.3 L1.7 8.3 Z" fill="#8a8a8a" stroke="#8a8a8a" stroke-width="3.2" stroke-linejoin="round"/></svg><div style="position:absolute;left:1268.20px;top:277.00px;width:12.50px;height:300.00px;background:#8a8a8a;border-radius:6.2px;"></div></div>
<div style="position:absolute;left:360.00px;top:211.00px;width:1558.00px;height:2.20px;background:#ccd6db;"></div>
<div style="position:absolute;left:443.00px;top:210.60px;width:136.00px;height:2.60px;background:#008146;"></div>
<div style="position:absolute;left:504.80px;top:205.60px;width:10.60px;height:10.60px;background:#008146;border-radius:50%;"></div>
<div style="position:absolute;left:1648.30px;top:213.00px;width:228.00px;height:547.00px;background:#fff;box-shadow:-2px 0 4px rgba(0,20,30,.18);"></div>
<div style="position:absolute;left:1876.00px;top:213.00px;width:1.00px;height:547.00px;background:#dcdcdc;"></div>
<div style="position:absolute;left:1877.00px;top:213.00px;width:41.00px;height:547.00px;background:#fff;"></div>
<span id="t93" class="t" style="left:1659.00px;top:227.00px;font-size:14.1px;font-weight:700;color:#008146;letter-spacing:0.651px;">Trial kitting</span>
<div style="position:absolute;left:1649.00px;top:251.20px;width:1204.00px;height:1.20px;background:#dedede;width:204px;"></div>
<span id="t94" class="t" style="left:1659.00px;top:266.00px;font-size:13.7px;font-weight:700;color:#333;transform:scaleX(0.9433);transform-origin:0 0;">TEXT</span><svg style="position:absolute;left:1824.70px;top:267.80px;" width="12.80" height="7.40" viewBox="0 0 12.8 7.4"><path d="M1 6.6000000000000005 L6.4 1.2 L11.8 6.6000000000000005" fill="none" stroke="#111" stroke-width="1.7" stroke-linecap="round" stroke-linejoin="round"/></svg>
<span id="t95" class="t" style="left:1668.80px;top:294.00px;font-size:14.1px;font-weight:700;color:#008146;letter-spacing:0.743px;">Header text</span>
<div style="position:absolute;left:1649.00px;top:319.90px;width:1204.00px;height:1.20px;background:#dedede;width:204px;"></div>
<span id="t96" class="t" style="left:1659.00px;top:334.00px;font-size:13.7px;font-weight:700;color:#333;letter-spacing:0.354px;">INQUIRIES</span><svg style="position:absolute;left:1824.70px;top:335.80px;" width="12.80" height="7.40" viewBox="0 0 12.8 7.4"><path d="M1 6.6000000000000005 L6.4 1.2 L11.8 6.6000000000000005" fill="none" stroke="#111" stroke-width="1.7" stroke-linecap="round" stroke-linejoin="round"/></svg>
<span id="t97" class="t" style="left:1668.80px;top:368.00px;font-size:13.7px;font-weight:700;color:#333;letter-spacing:0.508px;">MANUFACTURING</span><svg style="position:absolute;left:1824.70px;top:369.80px;" width="12.80" height="7.40" viewBox="0 0 12.8 7.4"><path d="M1 6.6000000000000005 L6.4 1.2 L11.8 6.6000000000000005" fill="none" stroke="#111" stroke-width="1.7" stroke-linecap="round" stroke-linejoin="round"/></svg>
<span id="t98" class="t" style="left:1678.30px;top:396.00px;font-size:14.1px;font-weight:700;color:#008146;letter-spacing:0.090px;">List of WOs</span>
<div style="position:absolute;left:1649.00px;top:425.70px;width:1204.00px;height:1.20px;background:#dedede;width:204px;"></div>
<span id="t99" class="t" style="left:1659.00px;top:441.00px;font-size:13.7px;font-weight:700;color:#333;letter-spacing:0.398px;">OPTIONS</span><svg style="position:absolute;left:1824.70px;top:442.80px;" width="12.80" height="7.40" viewBox="0 0 12.8 7.4"><path d="M1 6.6000000000000005 L6.4 1.2 L11.8 6.6000000000000005" fill="none" stroke="#111" stroke-width="1.7" stroke-linecap="round" stroke-linejoin="round"/></svg>
<span id="t100" class="t" style="left:1668.80px;top:469.00px;font-size:14.1px;font-weight:700;color:#008146;letter-spacing:0.309px;">Food allergens rollup</span>
<div style="position:absolute;left:1649.00px;top:493.90px;width:1204.00px;height:1.20px;background:#dedede;width:204px;"></div>
<span id="t101" class="t" style="left:1659.00px;top:509.00px;font-size:13.7px;font-weight:700;color:#333;letter-spacing:-0.136px;">VERSIONS</span><svg style="position:absolute;left:1824.70px;top:510.80px;" width="12.80" height="7.40" viewBox="0 0 12.8 7.4"><path d="M1 6.6000000000000005 L6.4 1.2 L11.8 6.6000000000000005" fill="none" stroke="#111" stroke-width="1.7" stroke-linecap="round" stroke-linejoin="round"/></svg>
<span id="t102" class="t" style="left:1668.80px;top:537.00px;font-size:14.1px;font-weight:700;color:#737373;transform:scaleX(0.9564);transform-origin:0 0;">Codes</span>
<span id="t103" class="t" style="left:1668.80px;top:566.00px;font-size:14.1px;font-weight:700;color:#737373;letter-spacing:-0.007px;">Revision</span>
<span id="t104" class="t" style="left:1668.80px;top:594.00px;font-size:14.1px;font-weight:700;color:#737373;letter-spacing:0.658px;">Validation</span>
<span id="t105" class="t" style="left:1668.80px;top:623.00px;font-size:14.1px;font-weight:700;color:#737373;letter-spacing:0.894px;">Management</span>
<div style="position:absolute;left:1649.00px;top:648.90px;width:1204.00px;height:1.20px;background:#dedede;width:204px;"></div>
<span id="t106" class="t" style="left:1659.00px;top:663.00px;font-size:13.7px;font-weight:700;color:#333;letter-spacing:-0.293px;">SELECTION</span><svg style="position:absolute;left:1824.70px;top:664.80px;" width="12.80" height="7.40" viewBox="0 0 12.8 7.4"><path d="M1 6.6000000000000005 L6.4 1.2 L11.8 6.6000000000000005" fill="none" stroke="#111" stroke-width="1.7" stroke-linecap="round" stroke-linejoin="round"/></svg>
<span id="t107" class="t" style="left:1668.80px;top:691.00px;font-size:14.1px;font-weight:700;color:#737373;letter-spacing:0.313px;">Advanced selection</span>
<span id="t108" class="t" style="left:1668.80px;top:720.00px;font-size:14.1px;font-weight:700;color:#737373;letter-spacing:0.372px;">Keyword selection</span>
<div style="position:absolute;left:1649.00px;top:745.70px;width:1204.00px;height:1.20px;background:#dedede;width:204px;"></div>
<svg style="position:absolute;left:1857.30px;top:220.60px;" width="14.60" height="10.40" viewBox="0 0 14.5 10"><path d="M7.25 1.8 L12.8 8.3 L1.7 8.3 Z" fill="#8a8a8a" stroke="#8a8a8a" stroke-width="3.2" stroke-linejoin="round"/></svg>
<div style="position:absolute;left:1858.30px;top:240.80px;width:12.50px;height:450.00px;background:#8a8a8a;border-radius:6.2px;"></div>
<div style="position:absolute;left:1884.30px;top:221.00px;width:27.60px;height:28.40px;background:#e6ebed;border-radius:2.2px;"></div>
<svg style="position:absolute;left:1884.30px;top:221.00px;" width="27.60" height="28.40" viewBox="0 0 27.6 28.4"><path d="M14.1 5.8 V22.8 M5.7 14.4 H22.7" stroke="#fff" stroke-width="3.1" fill="none"/></svg>
<div style="position:absolute;left:1884.30px;top:259.80px;width:27.60px;height:28.40px;background:#171717;border-radius:2.2px;"></div>
<svg style="position:absolute;left:1884.30px;top:259.80px;" width="27.60" height="28.40" viewBox="0 0 27.6 28.4"><path d="M5.7 6.9 Q5.7 4.8 7.8 4.8 H20.4 L23.7 8.1 V22.2 Q23.7 24.3 21.6 24.3 H7.8 Q5.7 24.3 5.7 22.2 Z" fill="#fff"/><path d="M9.3 4.8 V11.2 H19.4 V4.8" fill="none" stroke="#171717" stroke-width="1.1"/><rect x="15.6" y="6.1" width="2.8" height="3" fill="#171717"/><rect x="8.3" y="17.4" width="12.6" height="7" fill="#171717"/><rect x="9.6" y="18.8" width="10" height="1.9" fill="#fff"/><rect x="9.6" y="22" width="10" height="2.4" fill="#fff"/></svg>
<div style="position:absolute;left:1884.30px;top:298.20px;width:27.60px;height:28.40px;background:#e6ebed;border-radius:2.2px;"></div>
<svg style="position:absolute;left:1884.30px;top:298.20px;" width="27.60" height="28.40" viewBox="0 0 27.6 28.4"><path d="M6.3 14.6 L12.3 20.2 L22.4 9.2" stroke="#fff" stroke-width="3.7" fill="none"/></svg>
<div style="position:absolute;left:1884.30px;top:336.20px;width:27.60px;height:28.40px;background:#e6ebed;border-radius:2.2px;"></div>
<svg style="position:absolute;left:1884.30px;top:336.20px;" width="27.60" height="28.40" viewBox="0 0 27.6 28.4"><path d="M6 8.4 H22.6" stroke="#fff" stroke-width="1.7"/><path d="M10.7 8 V6.4 Q10.7 5.2 11.9 5.2 H16.7 Q17.9 5.2 17.9 6.4 V8" fill="none" stroke="#fff" stroke-width="1.5"/><path d="M7.6 10.6 H21 V21.6 Q21 23.4 19.2 23.4 H9.4 Q7.6 23.4 7.6 21.6 Z" fill="#fff"/><path d="M11 12.6 V21.6 M14.3 12.6 V21.6 M17.6 12.6 V21.6" stroke="#e6ebed" stroke-width="1.3"/></svg>
<div style="position:absolute;left:1884.30px;top:375.00px;width:27.60px;height:28.40px;background:#171717;border-radius:2.2px;"></div>
<svg style="position:absolute;left:1884.30px;top:375.00px;" width="27.60" height="28.40" viewBox="0 0 27.6 28.4"><path d="M6.2 6.3 L22.6 23 M22.6 6.3 L6.2 23" stroke="#fff" stroke-width="2.3" fill="none"/></svg>
<div style="position:absolute;left:1884.00px;top:413.00px;width:28.00px;height:1.00px;background:#c4c4c4;"></div>
<svg style="position:absolute;left:1888.50px;top:422.70px;" width="20.00" height="20.00" viewBox="0 0 20 20"><path d="M18.1 10.6 A8.4 8.4 0 1 1 14.4 2.9" fill="none" stroke="#151515" stroke-width="2.3"/><path d="M13 6.9 L19.3 1.2 V7.3 Z" fill="#151515" stroke="#151515" stroke-width="0.8" stroke-linejoin="round"/></svg>
<svg style="position:absolute;left:1888.60px;top:460.80px;" width="19.60" height="19.60" viewBox="0 0 19.6 19.6"><path d="M3.9 0.2 H12 L15.7 3.9 V7 H3.9 Z" fill="#151515"/><path d="M12.3 0.4 V3.6 H15.5" fill="none" stroke="#fff" stroke-width="1"/><path d="M2 8.8 H17.6 Q19.4 8.8 19.4 10.6 V16.6 H16.2 V12.6 H3.4 V16.6 H0.2 V10.6 Q0.2 8.8 2 8.8Z" fill="#151515"/><rect x="4.3" y="13.6" width="11" height="5.4" fill="#fff" stroke="#151515" stroke-width="1.4"/><path d="M5.4 15.6 H14.2 M5.4 17.2 H14.2" stroke="#888" stroke-width="0.9"/><rect x="14.6" y="10" width="2.6" height="1.1" fill="#fff"/></svg>
<svg style="position:absolute;left:1888.60px;top:499.40px;" width="19.40" height="19.80" viewBox="0 0 19.4 19.8"><g transform="rotate(45 9.7 9.9) translate(9.7 9.9) scale(1.12) translate(-9.7 -9.9)" fill="none" stroke="#bdbdbd" stroke-width="1.25"><path d="M12.7 4.6 V14.6 A3 3 0 0 1 6.7 14.6 V1.6 A2 2 0 0 1 10.7 1.6 V13.9 A1 1 0 0 1 8.7 13.9 V4.6" transform="translate(0 1.2)"/></g></svg>
<svg style="position:absolute;left:1888.40px;top:540.60px;" width="19.60" height="14.60" viewBox="0 0 19.6 14.6"><ellipse cx="10.4" cy="6.9" rx="9" ry="6.8" fill="#bdbdbd"/><path d="M4.6 10 L0.2 14.3 L8 12.6 Z" fill="#bdbdbd"/></svg>
<svg style="position:absolute;left:1889.00px;top:576.80px;" width="19.00" height="20.00" viewBox="0 0 19 20"><g fill="none" stroke="#151515" stroke-width="2"><path d="M5.6 10.2 H2.1 V18 H16.9 V10.2 H13.4"/><path d="M9.5 14.6 V2.6"/><path d="M4.3 7.1 L9.5 1.6 L14.7 7.1"/></g></svg>
</body></html>
